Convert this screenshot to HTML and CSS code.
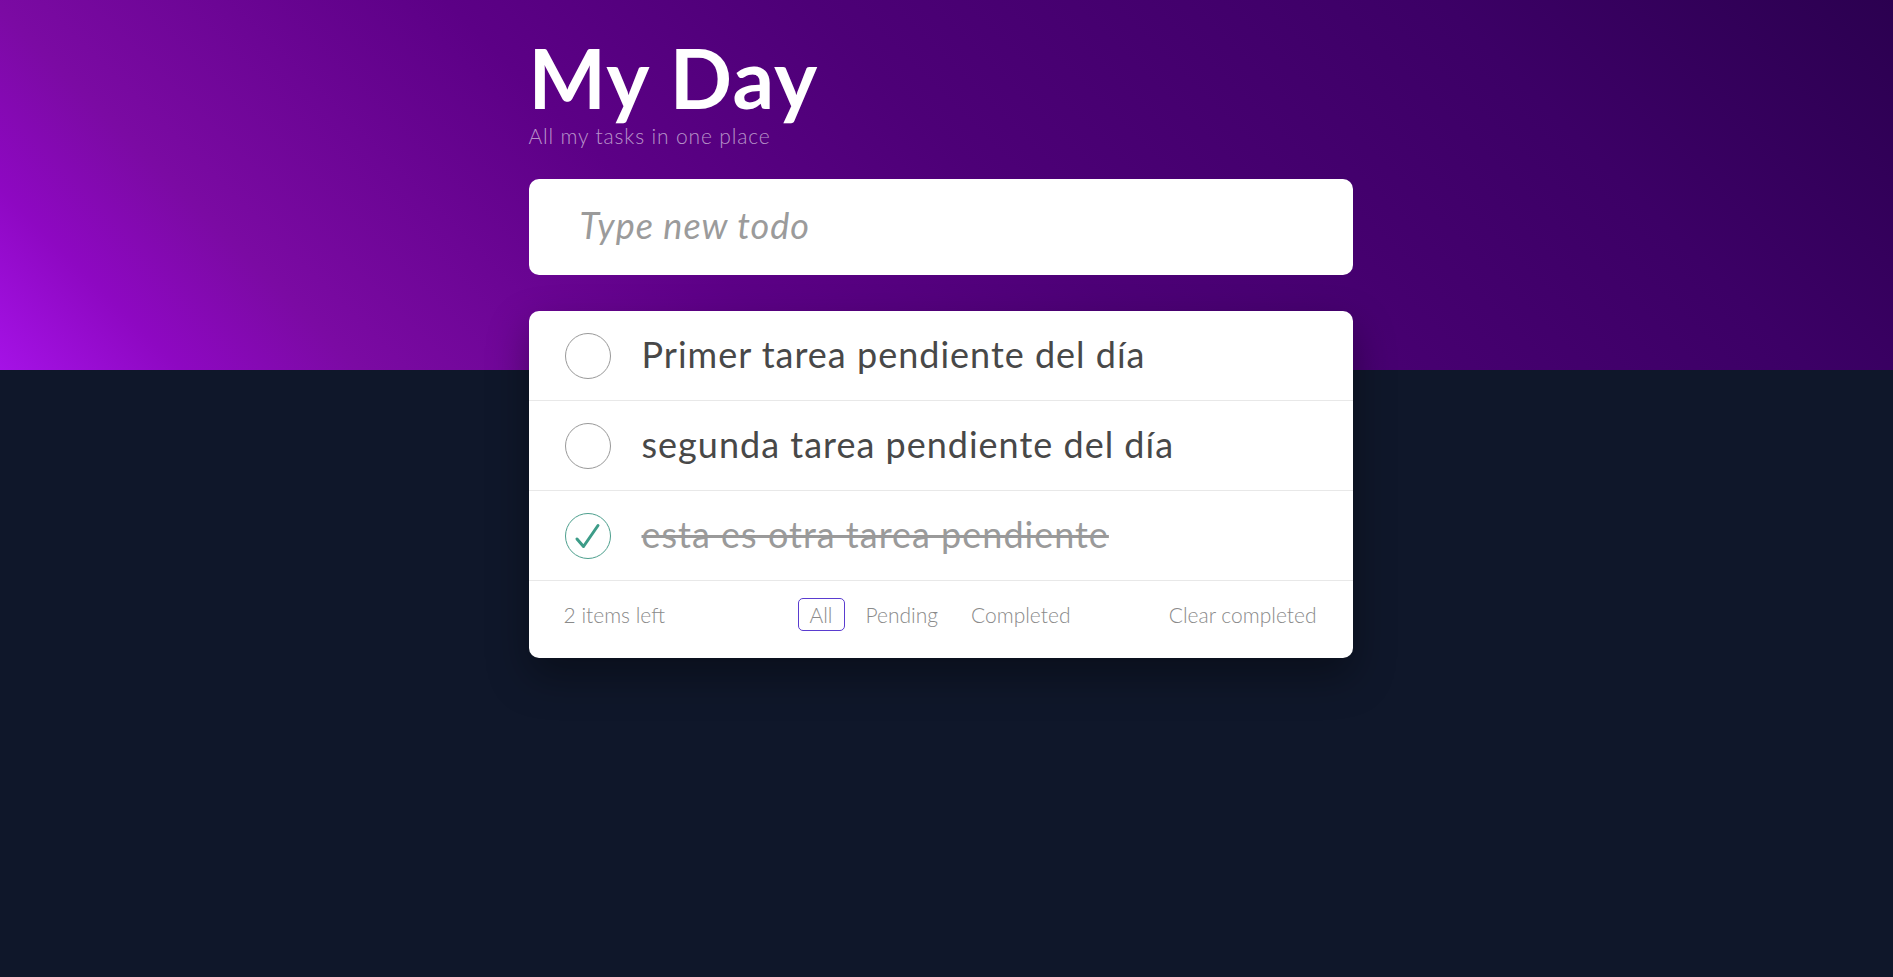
FILE: index.html
```html
<!DOCTYPE html>
<html lang="es">
<head>
<meta charset="utf-8">
<title>My Day</title>
<link rel="stylesheet" href="styles.css">
</head>
<body>
<main class="app">
  <header class="app-header">
    <h1 class="title">My Day</h1>
    <p class="subtitle">All my tasks in one place</p>
  </header>
  <input class="new-todo" type="text" placeholder="Type new todo">
  <section class="card">
    <ul class="todo-list">
      <li class="todo">
        <span class="toggle"></span>
        <span class="todo-text">Primer tarea pendiente del día</span>
      </li>
      <li class="todo">
        <span class="toggle"></span>
        <span class="todo-text">segunda tarea pendiente del día</span>
      </li>
      <li class="todo done">
        <span class="toggle checked">
          <svg viewBox="0 0 46 46" width="46" height="46"><path d="M12 26 L18.5 33.5 L33 12.5" fill="none" stroke="#3d9c88" stroke-width="3" stroke-linecap="round" stroke-linejoin="round"/></svg>
        </span>
        <span class="todo-text">esta es otra tarea pendiente</span>
      </li>
    </ul>
    <footer class="card-footer">
      <span class="count">2 items left</span>
      <nav class="filters">
        <a class="filter selected">All</a>
        <a class="filter">Pending</a>
        <a class="filter">Completed</a>
      </nav>
      <a class="clear">Clear completed</a>
    </footer>
  </section>
</main>
</body>
</html>
```

FILE: styles.css
```css
html, body {
  margin: 0;
  padding: 0;
}
body {
  min-height: 100vh;
  background-color: #0f172a;
  background-image: linear-gradient(45deg, #a512e6 0%, #8e08c2 8%, #7b0aa3 16%, #5c0086 36%, #4d0077 52%, #3c0066 80%, #2b0050 100%);
  background-size: 100% 370px;
  background-repeat: no-repeat;
  font-family: "Lato", "Liberation Sans", sans-serif;
}
.app {
  width: 824px;
  margin-left: calc(50% - 418px);
  padding-top: 37px;
}
.app-header {
  margin-bottom: 31px;
}
.title {
  margin: 0;
  font-size: 82px;
  line-height: 80px;
  font-weight: 700;
  color: #fff;
  letter-spacing: 1.2px;
}
.subtitle {
  margin: 6px 0 0;
  font-size: 21px;
  line-height: 25px;
  font-weight: 300;
  color: rgba(255, 255, 255, 0.58);
  letter-spacing: 0.85px;
}
.new-todo {
  display: block;
  box-sizing: border-box;
  width: 100%;
  height: 96px;
  border: none;
  border-radius: 10px;
  background: #fff;
  padding: 0 0 4px 51px;
  font-family: inherit;
  font-size: 36px;
  font-style: italic;
  color: #494949;
  letter-spacing: 1px;
  outline: none;
}
.new-todo::placeholder {
  color: #9b9b9b;
  font-style: italic;
  font-weight: 400;
}
.card {
  margin-top: 36px;
  background: #fff;
  border-radius: 10px;
  box-shadow: 0 18px 40px rgba(0, 0, 0, 0.35);
}
.todo-list {
  list-style: none;
  margin: 0;
  padding: 0;
}
.todo {
  display: flex;
  align-items: center;
  gap: 31px;
  height: 89px;
  padding: 0 36px;
  border-bottom: 1px solid #e8e8e8;
}
.toggle {
  flex: none;
  box-sizing: border-box;
  width: 46px;
  height: 46px;
  border: 1px solid #999;
  border-radius: 50%;
  display: flex;
  align-items: center;
  justify-content: center;
}
.toggle svg {
  display: block;
  flex: none;
  margin: -1px;
}
.toggle.checked {
  border-color: #4d9f8d;
}
.todo-text {
  padding-bottom: 4px;
  font-size: 36px;
  font-weight: 400;
  color: #484848;
  letter-spacing: 1px;
}
.done .todo-text {
  color: #9a9a9a;
  text-decoration: line-through;
  text-decoration-thickness: 3px;
}
.card-footer {
  display: grid;
  grid-template-columns: 1fr auto 1fr;
  align-items: center;
  height: 77px;
  box-sizing: border-box;
  padding: 0 36px 11px 35px;
  font-size: 21px;
  font-weight: 300;
  color: #8a8a8a;
}
.count {
  justify-self: start;
}
.filters {
  display: flex;
  gap: 9px;
}
.filter {
  padding: 4px 11px;
  border: 1px solid transparent;
  border-radius: 5px;
  line-height: 23px;
  cursor: pointer;
}
.filter.selected {
  border-color: #5a3ccf;
}
.clear {
  justify-self: end;
  cursor: pointer;
}
```
